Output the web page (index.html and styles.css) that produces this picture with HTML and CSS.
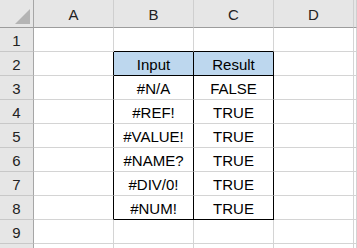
FILE: index.html
```html
<!DOCTYPE html>
<html>
<head>
<meta charset="utf-8">
<link rel="stylesheet" href="styles.css">
</head>
<body>
<div class="sheet">
  <div class="corner hd"><svg class="tri" width="16" height="16" viewBox="0 0 16 16"><polygon points="15,0 15,15 0,15" fill="#b4b4b4"/></svg></div>
  <div class="ch">A</div><div class="ch">B</div><div class="ch">C</div><div class="ch">D</div><div class="ch last"></div>

  <div class="rh">1</div><div class="c"></div><div class="c kb"></div><div class="c kb"></div><div class="c"></div><div class="c"></div>

  <div class="rh">2</div><div class="c kr"></div><div class="c kr kb th">Input</div><div class="c kr kb th">Result</div><div class="c"></div><div class="c"></div>

  <div class="rh">3</div><div class="c kr"></div><div class="c kr v">#N/A</div><div class="c kr v">FALSE</div><div class="c"></div><div class="c"></div>

  <div class="rh">4</div><div class="c kr"></div><div class="c kr v">#REF!</div><div class="c kr v">TRUE</div><div class="c"></div><div class="c"></div>

  <div class="rh">5</div><div class="c kr"></div><div class="c kr v">#VALUE!</div><div class="c kr v">TRUE</div><div class="c"></div><div class="c"></div>

  <div class="rh">6</div><div class="c kr"></div><div class="c kr v">#NAME?</div><div class="c kr v">TRUE</div><div class="c"></div><div class="c"></div>

  <div class="rh">7</div><div class="c kr"></div><div class="c kr v">#DIV/0!</div><div class="c kr v">TRUE</div><div class="c"></div><div class="c"></div>

  <div class="rh">8</div><div class="c kr"></div><div class="c kr kb v">#NUM!</div><div class="c kr kb v">TRUE</div><div class="c"></div><div class="c"></div>

  <div class="rh">9</div><div class="c"></div><div class="c"></div><div class="c"></div><div class="c"></div><div class="c"></div>

  <div class="rh"></div><div class="c"></div><div class="c"></div><div class="c"></div><div class="c"></div><div class="c"></div>
</div>
</body>
</html>
```

FILE: styles.css
```css
html, body {
  margin: 0;
  padding: 0;
  background: #ffffff;
  overflow: hidden;
}
.sheet {
  display: grid;
  grid-template-columns: 34px 80px 80px 80px 80px 3px;
  grid-template-rows: 28px repeat(10, 24px);
  width: 357px;
  height: 248px;
  overflow: hidden;
  font-family: "Liberation Sans", Arial, sans-serif;
  font-size: 15px;
  color: #000;
}
.sheet > div {
  box-sizing: border-box;
  display: flex;
  align-items: center;
  justify-content: center;
  padding-top: 1px;
  white-space: nowrap;
}
.corner {
  background: #e6e6e6;
  border-right: 1px solid #a6a6a6;
  border-bottom: 1px solid #9c9c9c;
  position: relative;
}
.tri {
  position: absolute;
  left: 15px;
  top: 9px;
}
.ch {
  background: #e6e6e6;
  border-right: 1px solid #cfcfcf;
  border-bottom: 1px solid #9c9c9c;
  color: #222;
}
.rh {
  background: #e6e6e6;
  border-right: 1px solid #a6a6a6;
  border-bottom: 1px solid #c8c8c8;
  color: #222;
}
.c {
  border-right: 1px solid #d4d4d4;
  border-bottom: 1px solid #d4d4d4;
}
.c.kr {
  border-right-color: #000;
}
.c.kb {
  border-bottom-color: #000;
}
.th {
  background: #bdd7ee;
}
```
